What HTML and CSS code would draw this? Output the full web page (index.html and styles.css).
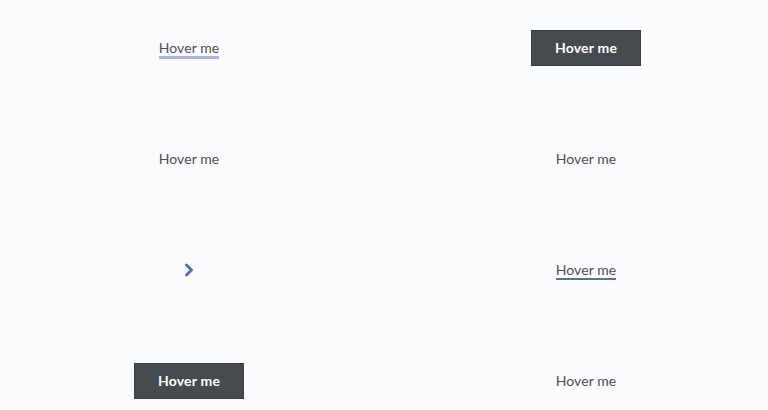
FILE: index.html
```html
<!DOCTYPE html>
<html lang="en">
<head>
    <meta charset="UTF-8">
    <meta name="viewport" content="width=device-width, initial-scale=1.0">
    <title>Hover effects</title>
    <link rel="stylesheet" href="styles.css">
</head>
<body>
    <div class="grid">
        <div class="cell"><a class="link link-marker" href="#">Hover me</a></div>
        <div class="cell"><a class="btn" href="#">Hover me</a></div>

        <div class="cell"><a class="link" href="#">Hover me</a></div>
        <div class="cell"><a class="link" href="#">Hover me</a></div>

        <div class="cell">
            <a class="arrow" href="#">
                <svg width="10" height="14" viewBox="0 0 10 14">
                    <path d="M2.5 2 L7.5 7 L2.5 12" fill="none" stroke="#5a6db3" stroke-width="3" stroke-linecap="round" stroke-linejoin="round"/>
                </svg>
            </a>
        </div>
        <div class="cell"><a class="link link-line" href="#">Hover me</a></div>

        <div class="cell"><a class="btn" href="#">Hover me</a></div>
        <div class="cell"><a class="link" href="#">Hover me</a></div>
    </div>
</body>
</html>
```

FILE: styles.css
```css
html, body {
    height: 100%;
}

body {
    margin: 0;
    background-color: #fafbfd;
    font-family: "Lato", "Liberation Sans", sans-serif;
    overflow: hidden;
}

.grid {
    display: grid;
    grid-template-columns: 378px 390px;
    grid-auto-rows: 111px;
    margin-top: -8px;
}

.cell {
    display: flex;
    align-items: center;
    justify-content: center;
}

.cell:nth-child(even) {
    padding-left: 26px;
}

.link {
    position: relative;
    color: #4d4f53;
    font-size: 14px;
    letter-spacing: 0.1px;
    text-decoration: none;
    line-height: 18px;
}

.link-marker::after {
    content: "";
    position: absolute;
    left: 0;
    right: 0;
    bottom: -2px;
    height: 3px;
    background-color: #a9b4e8;
}

.link-line::after {
    content: "";
    position: absolute;
    left: 0;
    right: 0;
    bottom: -1px;
    height: 2px;
    background-color: #5d6f9f;
}

.btn {
    display: flex;
    align-items: center;
    justify-content: center;
    width: 108px;
    height: 34px;
    background-color: #454b4f;
    border: 1px solid #3a3f43;
    color: #ffffff;
    font-size: 14px;
    font-weight: bold;
    letter-spacing: 0.2px;
    text-decoration: none;
}

.arrow {
    display: flex;
}
```
